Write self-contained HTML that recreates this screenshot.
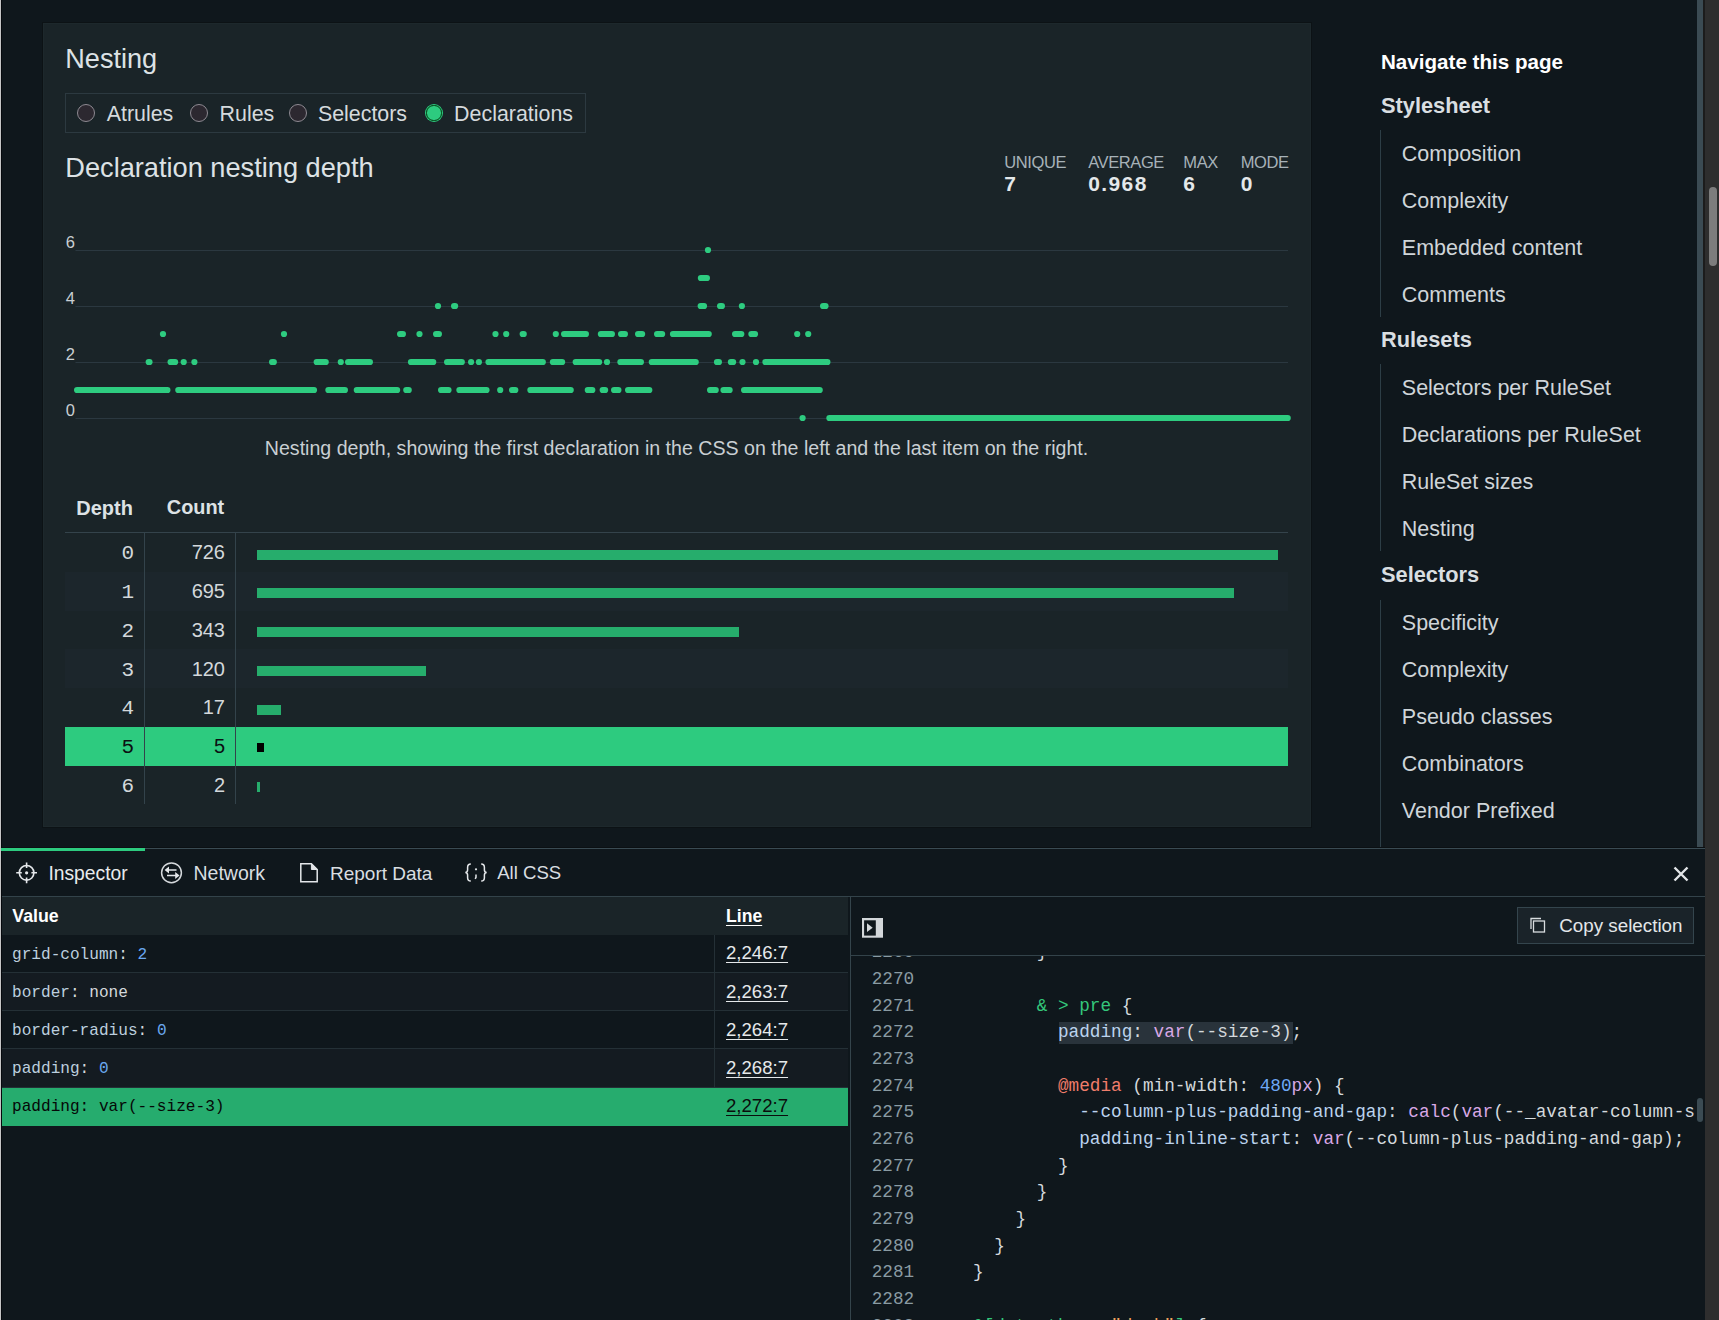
<!DOCTYPE html>
<html><head><meta charset="utf-8"><style>
html,body{margin:0;padding:0;}
body{width:1719px;height:1320px;overflow:hidden;background:#0f171c;position:relative;font-family:'Liberation Sans', sans-serif;}
.t{position:absolute;white-space:pre;}
.r{position:absolute;}
.chart{position:absolute;left:0;top:0;}
</style></head><body>
<div class="r" style="left:0px;top:0px;width:1px;height:1320px;background:#c6c6c6;"></div>
<div class="r" style="left:1px;top:0px;width:1px;height:1320px;background:#06090d;"></div>
<div class="r" style="left:43px;top:23px;width:1268px;height:804px;background:#1a2428;box-shadow:0 0 0 1px #0c1215, inset 0 0 0 1px #1d282c;"></div>
<div class="t" style="top:45.26px;left:65.30px;font-size:27.1px;line-height:27.1px;color:#dde2e5;font-weight:400;font-family:'Liberation Sans', sans-serif;">Nesting</div>
<div class="r" style="left:65px;top:93px;width:521px;height:40px;background:transparent;border:1px solid #2c3940;box-sizing:border-box;"></div>
<div class="r" style="left:76.9px;top:103.9px;width:18.2px;height:18.2px;border-radius:50%;background:#2c2830;border:1px solid #8e8a92;box-sizing:border-box"></div>
<div class="t" style="top:104.08px;left:106.70px;font-size:21.4px;line-height:21.4px;color:#d5dadd;font-weight:400;font-family:'Liberation Sans', sans-serif;">Atrules</div>
<div class="r" style="left:189.8px;top:103.9px;width:18.2px;height:18.2px;border-radius:50%;background:#2c2830;border:1px solid #8e8a92;box-sizing:border-box"></div>
<div class="t" style="top:104.08px;left:219.60px;font-size:21.4px;line-height:21.4px;color:#d5dadd;font-weight:400;font-family:'Liberation Sans', sans-serif;">Rules</div>
<div class="r" style="left:288.6px;top:103.9px;width:18.2px;height:18.2px;border-radius:50%;background:#2c2830;border:1px solid #8e8a92;box-sizing:border-box"></div>
<div class="t" style="top:104.08px;left:317.90px;font-size:21.4px;line-height:21.4px;color:#d5dadd;font-weight:400;font-family:'Liberation Sans', sans-serif;">Selectors</div>
<div class="r" style="left:424.9px;top:103.9px;width:18.2px;height:18.2px;border-radius:50%;background:#2dcb7f;box-sizing:border-box"></div>
<div class="r" style="left:426.4px;top:105.4px;width:15.2px;height:15.2px;border-radius:50%;background:#2dcb7f;border:1.6px solid #013a10;box-sizing:border-box"></div>
<div class="t" style="top:104.08px;left:454.10px;font-size:21.4px;line-height:21.4px;color:#d5dadd;font-weight:400;font-family:'Liberation Sans', sans-serif;">Declarations</div>
<div class="t" style="top:154.28px;left:65.30px;font-size:27.2px;line-height:27.2px;color:#dde2e5;font-weight:400;font-family:'Liberation Sans', sans-serif;">Declaration nesting depth</div>
<div class="t" style="top:154.43px;left:1004.30px;font-size:16.5px;line-height:16.5px;color:#a7b2b8;font-weight:400;font-family:'Liberation Sans', sans-serif;letter-spacing:-0.4px;">UNIQUE</div>
<div class="t" style="top:173.42px;left:1004.30px;font-size:21px;line-height:21px;color:#e4e8ea;font-weight:700;font-family:'Liberation Sans', sans-serif;letter-spacing:1.4px;">7</div>
<div class="t" style="top:154.43px;left:1088.20px;font-size:16.5px;line-height:16.5px;color:#a7b2b8;font-weight:400;font-family:'Liberation Sans', sans-serif;letter-spacing:-0.4px;">AVERAGE</div>
<div class="t" style="top:173.42px;left:1088.20px;font-size:21px;line-height:21px;color:#e4e8ea;font-weight:700;font-family:'Liberation Sans', sans-serif;letter-spacing:1.4px;">0.968</div>
<div class="t" style="top:154.43px;left:1183.30px;font-size:16.5px;line-height:16.5px;color:#a7b2b8;font-weight:400;font-family:'Liberation Sans', sans-serif;letter-spacing:-0.4px;">MAX</div>
<div class="t" style="top:173.42px;left:1183.30px;font-size:21px;line-height:21px;color:#e4e8ea;font-weight:700;font-family:'Liberation Sans', sans-serif;letter-spacing:1.4px;">6</div>
<div class="t" style="top:154.43px;left:1240.70px;font-size:16.5px;line-height:16.5px;color:#a7b2b8;font-weight:400;font-family:'Liberation Sans', sans-serif;letter-spacing:-0.4px;">MODE</div>
<div class="t" style="top:173.42px;left:1240.70px;font-size:21px;line-height:21px;color:#e4e8ea;font-weight:700;font-family:'Liberation Sans', sans-serif;letter-spacing:1.4px;">0</div>
<div class="t" style="top:234.03px;right:1644.00px;font-size:16.5px;line-height:16.5px;color:#c9cfd3;font-weight:400;font-family:'Liberation Sans', sans-serif;">6</div>
<div class="t" style="top:290.03px;right:1644.00px;font-size:16.5px;line-height:16.5px;color:#c9cfd3;font-weight:400;font-family:'Liberation Sans', sans-serif;">4</div>
<div class="t" style="top:346.03px;right:1644.00px;font-size:16.5px;line-height:16.5px;color:#c9cfd3;font-weight:400;font-family:'Liberation Sans', sans-serif;">2</div>
<div class="t" style="top:402.03px;right:1644.00px;font-size:16.5px;line-height:16.5px;color:#c9cfd3;font-weight:400;font-family:'Liberation Sans', sans-serif;">0</div>
<svg class="chart" width="1719" height="470" viewBox="0 0 1719 470"><g stroke="#2b3840" stroke-width="1"><path d="M75.5 250.5H1288M75.5 306.5H1288M75.5 362.5H1288M75.5 418.5H1288"/></g><g fill="#2ecc80"><circle cx="500.2" cy="390" r="3.1"/><circle cx="183.7" cy="362" r="3.1"/><circle cx="194.4" cy="362" r="3.1"/><circle cx="340.8" cy="362" r="3.1"/><circle cx="471.1" cy="362" r="3.1"/><circle cx="478.9" cy="362" r="3.1"/><circle cx="607.0" cy="362" r="3.1"/><circle cx="742.5" cy="362" r="3.1"/><circle cx="756.0" cy="362" r="3.1"/><circle cx="163.0" cy="334" r="3.1"/><circle cx="284.0" cy="334" r="3.1"/><circle cx="419.5" cy="334" r="3.1"/><circle cx="495.5" cy="334" r="3.1"/><circle cx="506.2" cy="334" r="3.1"/><circle cx="555.8" cy="334" r="3.1"/><circle cx="797.2" cy="334" r="3.1"/><circle cx="808.2" cy="334" r="3.1"/><circle cx="438.0" cy="306" r="3.1"/><circle cx="741.9" cy="306" r="3.1"/><circle cx="708.0" cy="250" r="3.1"/><circle cx="802.6" cy="418" r="3.1"/></g><g stroke="#2ecc80" stroke-width="6.2" stroke-linecap="round" fill="none"><path d="M77.1 390H167.4"/><path d="M178.3 390H314.0"/><path d="M328.4 390H344.9"/><path d="M356.8 390H397.1"/><path d="M406.3 390H408.7"/><path d="M441.1 390H448.5"/><path d="M459.4 390H486.5"/><path d="M512.1 390H515.3"/><path d="M530.4 390H570.7"/><path d="M587.8 390H592.3"/><path d="M602.7 390H605.1"/><path d="M614.1 390H618.4"/><path d="M628.1 390H649.3"/><path d="M710.1 390H715.7"/><path d="M723.5 390H729.6"/><path d="M744.1 390H819.7"/><path d="M148.7 362H149.5"/><path d="M170.6 362H175.1"/><path d="M272.1 362H273.8"/><path d="M316.7 362H325.7"/><path d="M348.1 362H369.9"/><path d="M411.0 362H433.2"/><path d="M447.1 362H461.8"/><path d="M488.5 362H542.8"/><path d="M552.9 362H562.1"/><path d="M575.7 362H599.1"/><path d="M620.4 362H640.9"/><path d="M651.8 362H695.7"/><path d="M717.0 362H718.9"/><path d="M730.9 362H733.1"/><path d="M765.4 362H827.4"/><path d="M400.1 334H402.9"/><path d="M436.1 334H438.9"/><path d="M522.7 334H523.7"/><path d="M564.1 334H585.9"/><path d="M600.9 334H611.9"/><path d="M621.1 334H624.9"/><path d="M638.1 334H642.1"/><path d="M657.1 334H662.1"/><path d="M673.0 334H708.7"/><path d="M735.1 334H741.3"/><path d="M751.4 334H755.0"/><path d="M454.1 306H455.1"/><path d="M700.7 306H704.0"/><path d="M720.1 306H721.9"/><path d="M823.1 306H825.5"/><path d="M700.9 278H706.9"/><path d="M829.4 418H1287.7"/></g></svg>
<div class="t" style="top:438.91px;left:76.50px;width:1200px;text-align:center;font-size:19.6px;line-height:19.6px;color:#c9cfd3;font-weight:400;font-family:'Liberation Sans', sans-serif;">Nesting depth, showing the first declaration in the CSS on the left and the last item on the right.</div>
<div class="t" style="top:497.57px;left:76.30px;font-size:20px;line-height:20px;color:#dde2e5;font-weight:700;font-family:'Liberation Sans', sans-serif;">Depth</div>
<div class="t" style="top:497.65px;left:166.80px;font-size:19.9px;line-height:19.9px;color:#dde2e5;font-weight:700;font-family:'Liberation Sans', sans-serif;">Count</div>
<div class="r" style="left:65px;top:532px;width:1223px;height:1px;background:#34434b;"></div>
<div class="t" style="top:543.30px;right:1585.00px;font-size:21px;line-height:21px;color:#d3d8db;font-weight:400;font-family:'Liberation Mono', monospace;">0</div>
<div class="t" style="top:542.47px;right:1494.00px;font-size:20px;line-height:20px;color:#d3d8db;font-weight:400;font-family:'Liberation Sans', sans-serif;">726</div>
<div class="r" style="left:257px;top:549.6px;width:1021px;height:10px;background:#26ad6c;"></div>
<div class="r" style="left:65px;top:571.75px;width:1223px;height:38.75px;background:#1c262c;"></div>
<div class="t" style="top:582.05px;right:1585.00px;font-size:21px;line-height:21px;color:#d3d8db;font-weight:400;font-family:'Liberation Mono', monospace;">1</div>
<div class="t" style="top:581.22px;right:1494.00px;font-size:20px;line-height:20px;color:#d3d8db;font-weight:400;font-family:'Liberation Sans', sans-serif;">695</div>
<div class="r" style="left:257px;top:588.35px;width:977px;height:10px;background:#26ad6c;"></div>
<div class="t" style="top:620.80px;right:1585.00px;font-size:21px;line-height:21px;color:#d3d8db;font-weight:400;font-family:'Liberation Mono', monospace;">2</div>
<div class="t" style="top:619.97px;right:1494.00px;font-size:20px;line-height:20px;color:#d3d8db;font-weight:400;font-family:'Liberation Sans', sans-serif;">343</div>
<div class="r" style="left:257px;top:627.1px;width:482px;height:10px;background:#26ad6c;"></div>
<div class="r" style="left:65px;top:649.25px;width:1223px;height:38.75px;background:#1c262c;"></div>
<div class="t" style="top:659.55px;right:1585.00px;font-size:21px;line-height:21px;color:#d3d8db;font-weight:400;font-family:'Liberation Mono', monospace;">3</div>
<div class="t" style="top:658.72px;right:1494.00px;font-size:20px;line-height:20px;color:#d3d8db;font-weight:400;font-family:'Liberation Sans', sans-serif;">120</div>
<div class="r" style="left:257px;top:665.85px;width:169px;height:10px;background:#26ad6c;"></div>
<div class="t" style="top:698.30px;right:1585.00px;font-size:21px;line-height:21px;color:#d3d8db;font-weight:400;font-family:'Liberation Mono', monospace;">4</div>
<div class="t" style="top:697.47px;right:1494.00px;font-size:20px;line-height:20px;color:#d3d8db;font-weight:400;font-family:'Liberation Sans', sans-serif;">17</div>
<div class="r" style="left:257px;top:704.6px;width:24px;height:10px;background:#26ad6c;"></div>
<div class="r" style="left:65px;top:726.75px;width:1223px;height:38.75px;background:#2dcb7f;"></div>
<div class="t" style="top:737.05px;right:1585.00px;font-size:21px;line-height:21px;color:#0b0f12;font-weight:400;font-family:'Liberation Mono', monospace;">5</div>
<div class="t" style="top:736.22px;right:1494.00px;font-size:20px;line-height:20px;color:#0b0f12;font-weight:400;font-family:'Liberation Sans', sans-serif;">5</div>
<div class="r" style="left:257px;top:742.75px;width:7px;height:9.5px;background:#000;"></div>
<div class="t" style="top:775.80px;right:1585.00px;font-size:21px;line-height:21px;color:#d3d8db;font-weight:400;font-family:'Liberation Mono', monospace;">6</div>
<div class="t" style="top:774.97px;right:1494.00px;font-size:20px;line-height:20px;color:#d3d8db;font-weight:400;font-family:'Liberation Sans', sans-serif;">2</div>
<div class="r" style="left:257px;top:782.1px;width:3px;height:10px;background:#26ad6c;"></div>
<div class="r" style="left:144px;top:533px;width:1px;height:271px;background:#33434b;"></div>
<div class="r" style="left:235px;top:533px;width:1px;height:271px;background:#33434b;"></div>
<div class="t" style="top:52.16px;left:1381.00px;font-size:20.6px;line-height:20.6px;color:#ffffff;font-weight:700;font-family:'Liberation Sans', sans-serif;">Navigate this page</div>
<div class="t" style="top:95.35px;left:1381.00px;font-size:21.8px;line-height:21.8px;color:#d9dee1;font-weight:700;font-family:'Liberation Sans', sans-serif;">Stylesheet</div>
<div class="t" style="top:329.35px;left:1381.00px;font-size:21.8px;line-height:21.8px;color:#d9dee1;font-weight:700;font-family:'Liberation Sans', sans-serif;">Rulesets</div>
<div class="t" style="top:564.35px;left:1381.00px;font-size:21.8px;line-height:21.8px;color:#d9dee1;font-weight:700;font-family:'Liberation Sans', sans-serif;">Selectors</div>
<div class="t" style="top:143.70px;left:1401.80px;font-size:21.5px;line-height:21.5px;color:#cfd5d9;font-weight:400;font-family:'Liberation Sans', sans-serif;">Composition</div>
<div class="t" style="top:190.70px;left:1401.80px;font-size:21.5px;line-height:21.5px;color:#cfd5d9;font-weight:400;font-family:'Liberation Sans', sans-serif;">Complexity</div>
<div class="t" style="top:237.70px;left:1401.80px;font-size:21.5px;line-height:21.5px;color:#cfd5d9;font-weight:400;font-family:'Liberation Sans', sans-serif;">Embedded content</div>
<div class="t" style="top:284.70px;left:1401.80px;font-size:21.5px;line-height:21.5px;color:#cfd5d9;font-weight:400;font-family:'Liberation Sans', sans-serif;">Comments</div>
<div class="t" style="top:377.70px;left:1401.80px;font-size:21.5px;line-height:21.5px;color:#cfd5d9;font-weight:400;font-family:'Liberation Sans', sans-serif;">Selectors per RuleSet</div>
<div class="t" style="top:424.70px;left:1401.80px;font-size:21.5px;line-height:21.5px;color:#cfd5d9;font-weight:400;font-family:'Liberation Sans', sans-serif;">Declarations per RuleSet</div>
<div class="t" style="top:471.70px;left:1401.80px;font-size:21.5px;line-height:21.5px;color:#cfd5d9;font-weight:400;font-family:'Liberation Sans', sans-serif;">RuleSet sizes</div>
<div class="t" style="top:518.70px;left:1401.80px;font-size:21.5px;line-height:21.5px;color:#cfd5d9;font-weight:400;font-family:'Liberation Sans', sans-serif;">Nesting</div>
<div class="t" style="top:612.70px;left:1401.80px;font-size:21.5px;line-height:21.5px;color:#cfd5d9;font-weight:400;font-family:'Liberation Sans', sans-serif;">Specificity</div>
<div class="t" style="top:659.70px;left:1401.80px;font-size:21.5px;line-height:21.5px;color:#cfd5d9;font-weight:400;font-family:'Liberation Sans', sans-serif;">Complexity</div>
<div class="t" style="top:706.70px;left:1401.80px;font-size:21.5px;line-height:21.5px;color:#cfd5d9;font-weight:400;font-family:'Liberation Sans', sans-serif;">Pseudo classes</div>
<div class="t" style="top:753.70px;left:1401.80px;font-size:21.5px;line-height:21.5px;color:#cfd5d9;font-weight:400;font-family:'Liberation Sans', sans-serif;">Combinators</div>
<div class="t" style="top:800.70px;left:1401.80px;font-size:21.5px;line-height:21.5px;color:#cfd5d9;font-weight:400;font-family:'Liberation Sans', sans-serif;">Vendor Prefixed</div>
<div class="r" style="left:1380px;top:130px;width:1px;height:187px;background:#2d3e46;"></div>
<div class="r" style="left:1380px;top:364px;width:1px;height:187px;background:#2d3e46;"></div>
<div class="r" style="left:1380px;top:600px;width:1px;height:248px;background:#2d3e46;"></div>
<div class="r" style="left:1697px;top:0px;width:6px;height:848px;background:#3b4b53;"></div>
<div class="r" style="left:1703px;top:0px;width:2px;height:1320px;background:#1c1c1c;"></div>
<div class="r" style="left:1705px;top:0px;width:14px;height:1320px;background:#2e2e2e;"></div>
<div class="r" style="left:1709px;top:187px;width:8px;height:79px;background:#7d7d7d;border-radius:4px;"></div>
<div class="r" style="left:2px;top:848px;width:1703px;height:472px;background:#0f171c;"></div>
<div class="r" style="left:2px;top:847px;width:1703px;height:1px;background:#0b1013;"></div>
<div class="r" style="left:2px;top:848px;width:1703px;height:1px;background:#3a4b53;"></div>
<div class="r" style="left:1px;top:848px;width:144px;height:3px;background:#2dcb7f;"></div>
<div class="r" style="left:2px;top:896px;width:1703px;height:1px;background:#33434a;"></div>
<div class="t" style="top:863.66px;left:48.40px;font-size:19.3px;line-height:19.3px;color:#e8ebed;font-weight:400;font-family:'Liberation Sans', sans-serif;">Inspector</div>
<div class="t" style="top:863.69px;left:193.50px;font-size:19.5px;line-height:19.5px;color:#d9dee1;font-weight:400;font-family:'Liberation Sans', sans-serif;">Network</div>
<div class="t" style="top:864.12px;left:330.00px;font-size:19px;line-height:19px;color:#d9dee1;font-weight:400;font-family:'Liberation Sans', sans-serif;">Report Data</div>
<div class="t" style="top:864.46px;left:497.20px;font-size:18.6px;line-height:18.6px;color:#d9dee1;font-weight:400;font-family:'Liberation Sans', sans-serif;">All CSS</div>
<svg class="r" style="left:0;top:848px" width="600" height="48" viewBox="0 848 600 48" fill="none" stroke="#e4e7ea" stroke-width="1.6">
<circle cx="26.6" cy="872.8" r="7.3"/><path d="M26.6 862.4v5.6M26.6 877.6v5.6M16.2 872.8h5.6M31.4 872.8h5.6"/><circle cx="26.6" cy="872.8" r="1.6" fill="#e4e7ea" stroke="none"/>
<circle cx="171.5" cy="872.8" r="9.9" stroke="#d5d9dc" stroke-width="1.5"/><path d="M167 870h9.5M177.5 875.5H167" stroke-width="1.7"/><path d="M164.6 870l4.4-3.6v7.2z M179.6 875.5l-4.4-3.6v7.2z" fill="#e4e7ea" stroke="none"/>
<path d="M300.8 863.7h10.6l5.8 5.8v12.3h-16.4z" stroke-width="1.5"/><path d="M311.4 863.7v5.8h5.8z" fill="#e4e7ea" stroke-width="1"/>
<path d="M470.8 864c-2.6 0-3.2 1.2-3.2 3.3v2.6c0 1.6-.8 2.4-2.2 2.6 1.4.2 2.2 1 2.2 2.6v2.6c0 2.1.6 3.3 3.2 3.3M481.2 864c2.6 0 3.2 1.2 3.2 3.3v2.6c0 1.6.8 2.4 2.2 2.6-1.4.2-2.2 1-2.2 2.6v2.6c0 2.1-.6 3.3-3.2 3.3" stroke-width="1.5"/><circle cx="476" cy="869.3" r="1.1" fill="#e4e7ea" stroke="none"/><path d="M476 874.5v2.8l-.8 1.6" stroke-width="1.5"/>
</svg>
<svg class="r" style="left:1670px;top:863px" width="22" height="22" viewBox="0 0 22 22" stroke="#e2e5e8" stroke-width="2.4"><path d="M4.5 4.5l13 13M17.5 4.5l-13 13"/></svg>
<div class="r" style="left:2px;top:897px;width:846px;height:38px;background:#1a2428;"></div>
<div class="t" style="top:907.93px;left:12.30px;font-size:17.8px;line-height:17.8px;color:#ffffff;font-weight:700;font-family:'Liberation Sans', sans-serif;">Value</div>
<div class="t" style="top:908.40px;left:726.00px;font-size:17.6px;line-height:17.6px;color:#ffffff;font-weight:700;font-family:'Liberation Sans', sans-serif;text-decoration:underline;text-underline-offset:3px;">Line</div>
<div class="r" style="left:2px;top:972.15px;width:846px;height:1px;background:#243036;"></div>
<div class="r" style="left:714px;top:935.0px;width:1px;height:38.15px;background:#243036;"></div>
<div class="t" style="top:946.66px;left:12.00px;font-size:16.1px;line-height:16.1px;color:#d4d9dc;font-weight:400;font-family:'Liberation Mono', monospace;"><span style="color:#bccfdf">grid-column</span><span style="color:#d4d9dc">: </span><span style="color:#6aa8f0">2</span></div>
<div class="t" style="top:944.46px;left:726.00px;font-size:18.6px;line-height:18.6px;color:#e6e9eb;font-weight:400;font-family:'Liberation Sans', sans-serif;text-decoration:underline;text-underline-offset:3px;text-decoration-thickness:1px;">2,246:7</div>
<div class="r" style="left:2px;top:973.15px;width:846px;height:38.15px;background:#141b21;"></div>
<div class="r" style="left:2px;top:1010.3px;width:846px;height:1px;background:#243036;"></div>
<div class="r" style="left:714px;top:973.15px;width:1px;height:38.15px;background:#243036;"></div>
<div class="t" style="top:984.81px;left:12.00px;font-size:16.1px;line-height:16.1px;color:#d4d9dc;font-weight:400;font-family:'Liberation Mono', monospace;"><span style="color:#bccfdf">border</span><span style="color:#d4d9dc">: none</span></div>
<div class="t" style="top:982.61px;left:726.00px;font-size:18.6px;line-height:18.6px;color:#e6e9eb;font-weight:400;font-family:'Liberation Sans', sans-serif;text-decoration:underline;text-underline-offset:3px;text-decoration-thickness:1px;">2,263:7</div>
<div class="r" style="left:2px;top:1048.45px;width:846px;height:1px;background:#243036;"></div>
<div class="r" style="left:714px;top:1011.3px;width:1px;height:38.15px;background:#243036;"></div>
<div class="t" style="top:1022.96px;left:12.00px;font-size:16.1px;line-height:16.1px;color:#d4d9dc;font-weight:400;font-family:'Liberation Mono', monospace;"><span style="color:#bccfdf">border-radius</span><span style="color:#d4d9dc">: </span><span style="color:#6aa8f0">0</span></div>
<div class="t" style="top:1020.76px;left:726.00px;font-size:18.6px;line-height:18.6px;color:#e6e9eb;font-weight:400;font-family:'Liberation Sans', sans-serif;text-decoration:underline;text-underline-offset:3px;text-decoration-thickness:1px;">2,264:7</div>
<div class="r" style="left:2px;top:1049.45px;width:846px;height:38.15px;background:#141b21;"></div>
<div class="r" style="left:2px;top:1086.6px;width:846px;height:1px;background:#243036;"></div>
<div class="r" style="left:714px;top:1049.45px;width:1px;height:38.15px;background:#243036;"></div>
<div class="t" style="top:1061.11px;left:12.00px;font-size:16.1px;line-height:16.1px;color:#d4d9dc;font-weight:400;font-family:'Liberation Mono', monospace;"><span style="color:#bccfdf">padding</span><span style="color:#d4d9dc">: </span><span style="color:#6aa8f0">0</span></div>
<div class="t" style="top:1058.91px;left:726.00px;font-size:18.6px;line-height:18.6px;color:#e6e9eb;font-weight:400;font-family:'Liberation Sans', sans-serif;text-decoration:underline;text-underline-offset:3px;text-decoration-thickness:1px;">2,268:7</div>
<div class="r" style="left:2px;top:1087.6px;width:846px;height:38.15px;background:#26ac6e;"></div>
<div class="t" style="top:1099.26px;left:12.00px;font-size:16.1px;line-height:16.1px;color:#d4d9dc;font-weight:400;font-family:'Liberation Mono', monospace;"><span style="color:#050807">padding: var(--size-3)</span></div>
<div class="t" style="top:1097.06px;left:726.00px;font-size:18.6px;line-height:18.6px;color:#0a0d0c;font-weight:400;font-family:'Liberation Sans', sans-serif;text-decoration:underline;text-underline-offset:3px;text-decoration-thickness:1px;">2,272:7</div>
<div class="r" style="left:849.5px;top:897px;width:1.5px;height:423px;background:#34444b;"></div>
<div class="r" style="left:851px;top:955px;width:854px;height:1px;background:#33434a;"></div>
<svg class="r" style="left:862px;top:918px" width="21" height="20" viewBox="0 0 21 20"><rect x="0" y="0" width="21" height="19.7" fill="#d3d7da"/><rect x="2.1" y="2.3" width="11.7" height="15.3" fill="#0f171c"/><path d="M5 5.3l5.7 4.4-5.7 4.4z" fill="#d3d7da"/></svg>
<div class="r" style="left:1517px;top:907px;width:177px;height:37px;background:#1a2329;border:1px solid #34454d;box-sizing:border-box;"></div>
<svg class="r" style="left:1529px;top:916px" width="19" height="19" viewBox="0 0 19 19" fill="none" stroke="#d8dcdf" stroke-width="1.3"><path d="M2 13V2.5h10"/><rect x="4.5" y="5" width="11" height="11" fill="#1a2329"/></svg>
<div class="t" style="top:916.99px;left:1559.30px;font-size:18.8px;line-height:18.8px;color:#e3e7e9;font-weight:400;font-family:'Liberation Sans', sans-serif;">Copy selection</div>
<div class="r" style="left:851px;top:956px;width:844px;height:364px;overflow:hidden"><div class="r" style="left:208px;top:66px;width:234px;height:22px;background:#29333b"></div><div class="t" style="left:20.70px;top:-11.84px;font:17.7px/17.7px 'Liberation Mono', monospace;color:#8a9ba3">2269</div><div class="t" style="left:185.76px;top:-11.84px;font:17.7px/17.7px 'Liberation Mono', monospace;color:#d4d9dc"><span style="color:#d4d9dc">}</span></div><div class="t" style="left:20.70px;top:14.83px;font:17.7px/17.7px 'Liberation Mono', monospace;color:#8a9ba3">2270</div><div class="t" style="left:20.70px;top:41.50px;font:17.7px/17.7px 'Liberation Mono', monospace;color:#8a9ba3">2271</div><div class="t" style="left:185.76px;top:41.50px;font:17.7px/17.7px 'Liberation Mono', monospace;color:#d4d9dc"><span style="color:#34c77b">&amp; &gt; pre</span><span style="color:#d4d9dc"> {</span></div><div class="t" style="left:20.70px;top:68.17px;font:17.7px/17.7px 'Liberation Mono', monospace;color:#8a9ba3">2272</div><div class="t" style="left:207.00px;top:68.17px;font:17.7px/17.7px 'Liberation Mono', monospace;color:#d4d9dc"><span style="color:#bcd3ee">padding</span><span style="color:#d4d9dc">: </span><span style="color:#d8a8e6">var</span><span style="color:#d4d9dc">(--size-3);</span></div><div class="t" style="left:20.70px;top:94.84px;font:17.7px/17.7px 'Liberation Mono', monospace;color:#8a9ba3">2273</div><div class="t" style="left:20.70px;top:121.51px;font:17.7px/17.7px 'Liberation Mono', monospace;color:#8a9ba3">2274</div><div class="t" style="left:207.00px;top:121.51px;font:17.7px/17.7px 'Liberation Mono', monospace;color:#d4d9dc"><span style="color:#f07d6b">@media</span><span style="color:#d4d9dc"> (min-width: </span><span style="color:#6ea8f5">480</span><span style="color:#d8a8e6">px</span><span style="color:#d4d9dc">) {</span></div><div class="t" style="left:20.70px;top:148.18px;font:17.7px/17.7px 'Liberation Mono', monospace;color:#8a9ba3">2275</div><div class="t" style="left:228.24px;top:148.18px;font:17.7px/17.7px 'Liberation Mono', monospace;color:#d4d9dc"><span style="color:#bcd3ee">--column-plus-padding-and-gap</span><span style="color:#d4d9dc">: </span><span style="color:#d8a8e6">calc</span><span style="color:#d4d9dc">(</span><span style="color:#d8a8e6">var</span><span style="color:#d4d9dc">(--_avatar-column-size) + var(--column-gap))</span></div><div class="t" style="left:20.70px;top:174.85px;font:17.7px/17.7px 'Liberation Mono', monospace;color:#8a9ba3">2276</div><div class="t" style="left:228.24px;top:174.85px;font:17.7px/17.7px 'Liberation Mono', monospace;color:#d4d9dc"><span style="color:#bcd3ee">padding-inline-start</span><span style="color:#d4d9dc">: </span><span style="color:#d8a8e6">var</span><span style="color:#d4d9dc">(--column-plus-padding-and-gap);</span></div><div class="t" style="left:20.70px;top:201.52px;font:17.7px/17.7px 'Liberation Mono', monospace;color:#8a9ba3">2277</div><div class="t" style="left:207.00px;top:201.52px;font:17.7px/17.7px 'Liberation Mono', monospace;color:#d4d9dc"><span style="color:#d4d9dc">}</span></div><div class="t" style="left:20.70px;top:228.19px;font:17.7px/17.7px 'Liberation Mono', monospace;color:#8a9ba3">2278</div><div class="t" style="left:185.76px;top:228.19px;font:17.7px/17.7px 'Liberation Mono', monospace;color:#d4d9dc"><span style="color:#d4d9dc">}</span></div><div class="t" style="left:20.70px;top:254.86px;font:17.7px/17.7px 'Liberation Mono', monospace;color:#8a9ba3">2279</div><div class="t" style="left:164.52px;top:254.86px;font:17.7px/17.7px 'Liberation Mono', monospace;color:#d4d9dc"><span style="color:#d4d9dc">}</span></div><div class="t" style="left:20.70px;top:281.53px;font:17.7px/17.7px 'Liberation Mono', monospace;color:#8a9ba3">2280</div><div class="t" style="left:143.28px;top:281.53px;font:17.7px/17.7px 'Liberation Mono', monospace;color:#d4d9dc"><span style="color:#d4d9dc">}</span></div><div class="t" style="left:20.70px;top:308.20px;font:17.7px/17.7px 'Liberation Mono', monospace;color:#8a9ba3">2281</div><div class="t" style="left:122.04px;top:308.20px;font:17.7px/17.7px 'Liberation Mono', monospace;color:#d4d9dc"><span style="color:#d4d9dc">}</span></div><div class="t" style="left:20.70px;top:334.87px;font:17.7px/17.7px 'Liberation Mono', monospace;color:#8a9ba3">2282</div><div class="t" style="left:20.70px;top:361.54px;font:17.7px/17.7px 'Liberation Mono', monospace;color:#8a9ba3">2283</div><div class="t" style="left:122.04px;top:361.54px;font:17.7px/17.7px 'Liberation Mono', monospace;color:#d4d9dc"><span style="color:#34c77b">&amp;[data-theme=</span><span style="color:#f0a35e">"dark"</span><span style="color:#34c77b">]</span><span style="color:#d4d9dc"> {</span></div></div>
<div class="r" style="left:1697px;top:1098px;width:6px;height:24px;background:#3b4b53;border-radius:3px;"></div>
</body></html>
